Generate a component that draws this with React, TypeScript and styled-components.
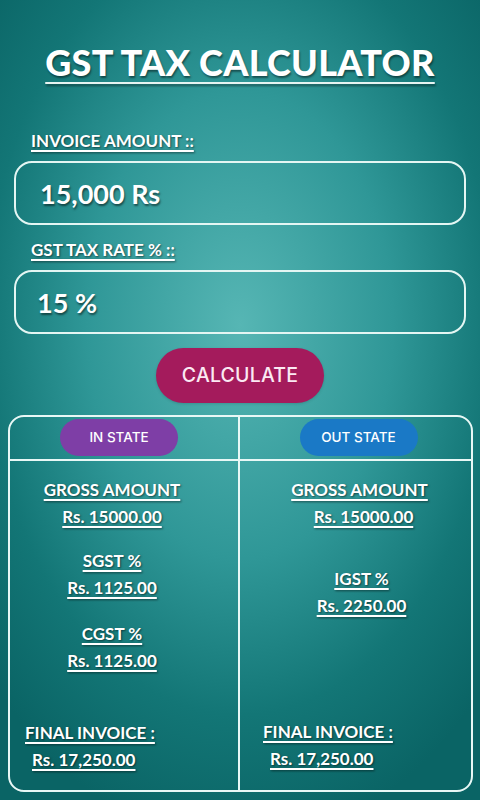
import React from "react";
import styled, { createGlobalStyle } from "styled-components";

const Global = createGlobalStyle`
  html, body { margin: 0; padding: 0; }
  body {
    width: 480px;
    height: 800px;
    overflow: hidden;
    font-family: "Lato", "Open Sans", sans-serif;
  }
  * { box-sizing: border-box; }
`;

const Page = styled.div`
  width: 480px;
  height: 800px;
  background: radial-gradient(ellipse 340px 520px at 240px 325px, #56b6b4 0%, #2f9797 45%, #137676 75%, #0a6465 100%);
  display: flex;
  flex-direction: column;
  color: #fff;
`;

const Title = styled.h1`
  margin: 0;
  padding-top: 39px;
  text-align: center;
  font-family: "Lato", sans-serif;
  font-weight: 900;
  font-size: 36px;
  line-height: 46px;
  letter-spacing: 0.3px;
  text-decoration: underline;
  text-decoration-thickness: 2px;
  text-underline-offset: 6px;
  text-decoration-color: #e6f4f2;
  text-shadow: 1px 2px 2px rgba(0, 0, 0, 0.45);
`;

const Field = styled.div`
  display: flex;
  flex-direction: column;
  padding: 0 14px;
`;

const Label = styled.div<{ $top: number }>`
  margin-top: ${(p) => p.$top}px;
  padding-left: 17px;
  font-weight: 700;
  font-size: 17px;
  line-height: 24px;
  text-decoration: underline;
  text-decoration-thickness: 1.5px;
  text-underline-offset: 3px;
  text-shadow: 1px 1px 2px rgba(0, 0, 0, 0.5);
`;

const InputBox = styled.div<{ $pad: number }>`
  margin-top: 8px;
  height: 64px;
  border: 2px solid #e4f6f3;
  border-radius: 18px;
  display: flex;
  align-items: center;
  padding-left: ${(p) => p.$pad}px;
  font-weight: 700;
  font-size: 27px;
  text-shadow: 1px 2px 2px rgba(0, 0, 0, 0.5);
`;

const ButtonRow = styled.div`
  display: flex;
  justify-content: center;
  margin-top: 14px;
`;

const CalcButton = styled.button`
  width: 168px;
  height: 55px;
  border: none;
  border-radius: 28px;
  background: #a41b5c;
  color: #fbe9f3;
  font-family: "Inter", "Open Sans", sans-serif;
  font-weight: 500;
  font-size: 19.5px;
  letter-spacing: 0.2px;
  padding: 0 0 2px 0;
  box-shadow: 0 1px 3px rgba(0, 0, 0, 0.15);
`;

const Table = styled.div`
  margin: 12px 7px 0 8px;
  height: 377px;
  border: 2px solid #e8f8f6;
  border-radius: 16px;
  display: grid;
  grid-template-columns: 230px 1fr;
  grid-template-rows: 44px 1fr;
  overflow: hidden;
`;

const HeadCell = styled.div<{ $shift: number; $divider?: boolean }>`
  display: flex;
  justify-content: center;
  align-items: center;
  border-bottom: 2px solid #e8f8f6;
  border-right: ${(p) => (p.$divider ? "2px solid #e8f8f6" : "none")};
  padding-left: ${(p) => Math.max(0, p.$shift)}px;
  padding-right: ${(p) => Math.max(0, -p.$shift)}px;
`;

const Pill = styled.div<{ $bg: string }>`
  width: 118px;
  height: 37px;
  border-radius: 19px;
  background: ${(p) => p.$bg};
  display: flex;
  align-items: center;
  justify-content: center;
  font-family: "Inter", "Open Sans", sans-serif;
  font-weight: 500;
  font-size: 13.5px;
  color: #fff;
  margin-top: -2px;
`;

const BodyCell = styled.div<{ $divider?: boolean }>`
  display: flex;
  flex-direction: column;
  border-right: ${(p) => (p.$divider ? "2px solid #e8f8f6" : "none")};
  padding-top: 15px;
`;

const Line = styled.div<{ $top?: number; $dx?: number; $left?: number }>`
  align-self: ${(p) => (p.$left !== undefined ? "flex-start" : "center")};
  margin-top: ${(p) => p.$top ?? 0}px;
  margin-left: ${(p) => (p.$left !== undefined ? p.$left : 0)}px;
  transform: translateX(${(p) => p.$dx ?? 0}px);
  font-weight: 700;
  font-size: 17px;
  line-height: 27px;
  text-decoration: underline;
  text-decoration-thickness: 1.5px;
  text-underline-offset: 3px;
  text-shadow: 1px 1px 2px rgba(0, 0, 0, 0.5);
  white-space: nowrap;
`;

export default function App() {
  return (
    <>
      <Global />
      <Page>
        <Title>GST TAX CALCULATOR</Title>
        <Field>
          <Label $top={44}>INVOICE AMOUNT ::</Label>
          <InputBox $pad={24}>15,000 Rs</InputBox>
        </Field>
        <Field>
          <Label $top={13}>GST TAX RATE % ::</Label>
          <InputBox $pad={21}>15 %</InputBox>
        </Field>
        <ButtonRow>
          <CalcButton>CALCULATE</CalcButton>
        </ButtonRow>
        <Table>
          <HeadCell $shift={-10} $divider>
            <Pill $bg="#7e3ea6">IN STATE</Pill>
          </HeadCell>
          <HeadCell $shift={6}>
            <Pill $bg="#1a79c6">OUT STATE</Pill>
          </HeadCell>
          <BodyCell $divider>
            <Line $dx={-12}>GROSS AMOUNT</Line>
            <Line $dx={-12}>Rs. 15000.00</Line>
            <Line $dx={-12} $top={17}>SGST %</Line>
            <Line $dx={-12}>Rs. 1125.00</Line>
            <Line $dx={-12} $top={19}>CGST %</Line>
            <Line $dx={-12}>Rs. 1125.00</Line>
            <Line $left={15} $top={45}>FINAL INVOICE :</Line>
            <Line $left={22}>Rs. 17,250.00</Line>
          </BodyCell>
          <BodyCell>
            <Line $dx={4}>GROSS AMOUNT</Line>
            <Line $dx={8}>Rs. 15000.00</Line>
            <Line $dx={6} $top={35}>IGST %</Line>
            <Line $dx={6}>Rs. 2250.00</Line>
            <Line $left={23} $top={99}>FINAL INVOICE :</Line>
            <Line $left={30}>Rs. 17,250.00</Line>
          </BodyCell>
        </Table>
      </Page>
    </>
  );
}
